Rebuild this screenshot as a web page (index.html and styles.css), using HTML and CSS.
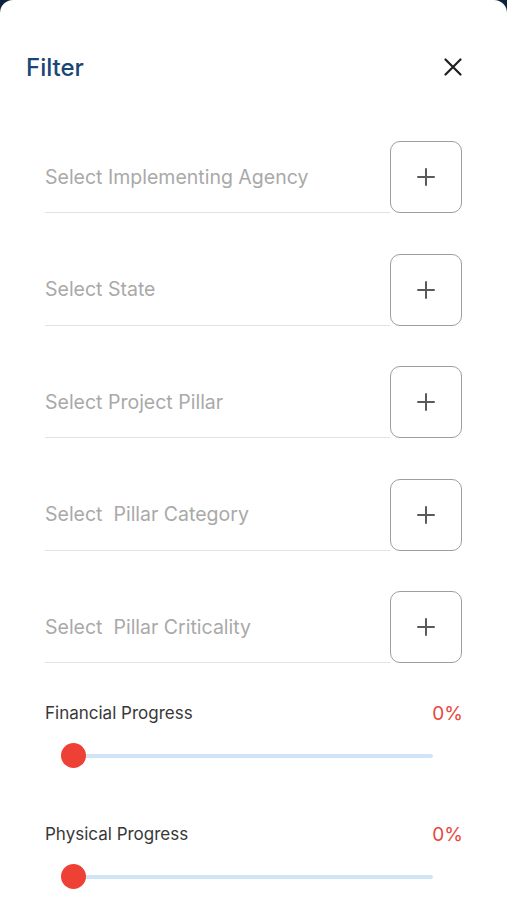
FILE: index.html
```html
<!DOCTYPE html>
<html>
	<head>
		<meta charset="utf-8">
		<title>Filter</title>
		<link rel="stylesheet" href="styles.css">
	</head>

	<body>
		<main class="sheet">
			<header class="sheet-head">
				<h1 class="sheet-title">Filter</h1>
				<button class="close-btn" aria-label="Close">
					<svg width="18" height="18" viewBox="0 0 18 18">
						<path d="M1.5 1.5 L16.5 16.5 M16.5 1.5 L1.5 16.5" stroke="#1f1f1f" stroke-width="2.2" stroke-linecap="round" fill="none"/>
					</svg>
				</button>
			</header>

			<section class="pickers">
				<div class="picker">
					<span class="picker-field">Select Implementing Agency</span>
					<button class="add-btn" aria-label="Add"><span class="plus"></span></button>
				</div>
				<div class="picker">
					<span class="picker-field">Select State</span>
					<button class="add-btn" aria-label="Add"><span class="plus"></span></button>
				</div>
				<div class="picker">
					<span class="picker-field">Select Project Pillar</span>
					<button class="add-btn" aria-label="Add"><span class="plus"></span></button>
				</div>
				<div class="picker">
					<span class="picker-field">Select&nbsp; Pillar Category</span>
					<button class="add-btn" aria-label="Add"><span class="plus"></span></button>
				</div>
				<div class="picker">
					<span class="picker-field">Select&nbsp; Pillar Criticality</span>
					<button class="add-btn" aria-label="Add"><span class="plus"></span></button>
				</div>
			</section>

			<section class="progress-list">
				<div class="progress">
					<div class="progress-head">
						<span class="progress-label">Financial Progress</span>
						<output class="progress-value">0%</output>
					</div>
					<div class="slider">
						<div class="slider-track"></div>
						<div class="slider-thumb"></div>
					</div>
				</div>
				<div class="progress">
					<div class="progress-head">
						<span class="progress-label">Physical Progress</span>
						<output class="progress-value">0%</output>
					</div>
					<div class="slider">
						<div class="slider-track"></div>
						<div class="slider-thumb"></div>
					</div>
				</div>
			</section>
		</main>
	</body>
</html>
```

FILE: styles.css
```css
:root {
	box-sizing: border-box;
}

*, *::before, *::after {
	box-sizing: inherit;
}

html, body {
	margin: 0;
	height: 100%;
}

body {
	background-color: #0c2340;
	font-family: "Inter", "Liberation Sans", sans-serif;
}

button {
	font: inherit;
	padding: 0;
	background: none;
	border: none;
	cursor: pointer;
}

.sheet {
	min-height: 100%;
	background-color: white;
	border-radius: 13px 13px 0 0;
	padding: 45px 45px 0 26px;
}

.sheet-head {
	display: flex;
	align-items: center;
	justify-content: space-between;
	height: 44px;
}

.sheet-title {
	margin: 0;
	font-size: 24px;
	font-weight: 500;
	color: #1a4676;
}

.close-btn {
	display: flex;
	width: 18px;
	height: 18px;
}

.pickers {
	display: flex;
	flex-direction: column;
	gap: 40.5px;
	margin-top: 52px;
	padding-left: 19px;
}

.picker {
	display: flex;
	height: 72px;

	& > .picker-field {
		flex-grow: 1;
		display: flex;
		align-items: center;
		border-bottom: 1.5px solid #e2e2e2;
		font-size: 19.5px;
		color: #a9a9a9;
	}
}

.add-btn {
	flex: none;
	display: flex;
	align-items: center;
	justify-content: center;
	width: 72px;
	height: 72px;
	border: 1.5px solid #9e9e9e;
	border-radius: 10px;
}

.plus {
	position: relative;
	width: 18px;
	height: 18px;

	&::before, &::after {
		content: "";
		position: absolute;
		background-color: #5a5a5a;
		border-radius: 1px;
	}

	&::before {
		left: 0;
		right: 0;
		top: 8px;
		height: 2px;
	}

	&::after {
		top: 0;
		bottom: 0;
		left: 8px;
		width: 2px;
	}
}

.progress-list {
	display: flex;
	flex-direction: column;
	gap: 56px;
	margin-top: 40px;
	padding-left: 19px;
}

.progress-head {
	display: flex;
	align-items: center;
	justify-content: space-between;
	height: 20px;
}

.progress-label {
	font-size: 17px;
	color: #383838;
}

.progress-value {
	font-size: 19px;
	color: #e8473d;
	margin-right: -1px;
}

.slider {
	position: relative;
	display: flex;
	align-items: center;
	height: 25px;
	margin: 20px 29px 0 16px;
}

.slider-track {
	flex-grow: 1;
	height: 4px;
	margin-left: 12px;
	border-radius: 2px;
	background-color: #cfe4f7;
}

.slider-thumb {
	position: absolute;
	left: 0;
	top: 0;
	width: 25px;
	height: 25px;
	border-radius: 50%;
	background-color: #ef4036;
}
```
